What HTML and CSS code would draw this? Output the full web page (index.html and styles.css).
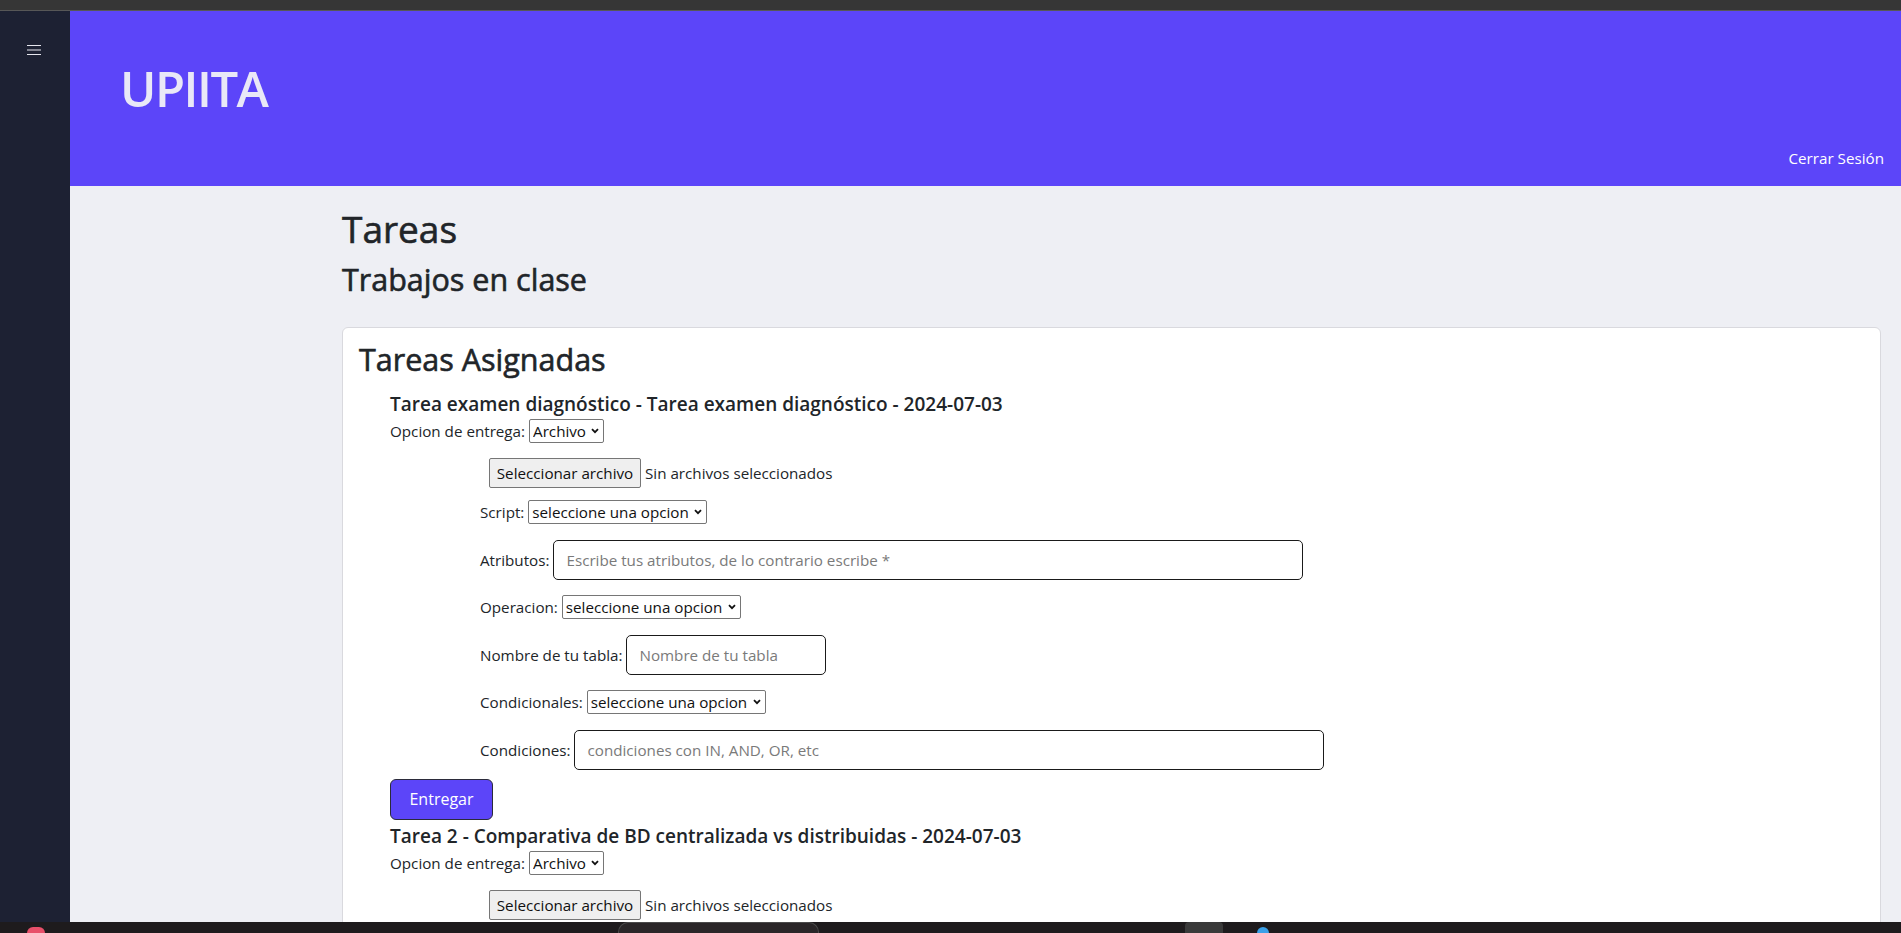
FILE: index.html
```html
<!DOCTYPE html>
<html lang="es">
<head>
<meta charset="utf-8">
<title>UPIITA - Tareas</title>
<link rel="stylesheet" href="styles.css">
</head>
<body>
  <div class="os-top"></div>
  <div class="app">
    <aside class="sidebar">
      <button class="menu-btn" type="button" aria-label="Menú">
        <svg width="14" height="11" viewBox="0 0 14 11"><path d="M0 0.5H14M0 5H14M0 9.5H14" stroke="#e6e6ee" stroke-width="1.2"/></svg>
      </button>
    </aside>
    <div class="main">
      <header class="topbar">
        <h1 class="brand">UPIITA</h1>
        <a class="logout" href="#">Cerrar Sesión</a>
      </header>
      <div class="content">
        <h1 class="page-title">Tareas</h1>
        <h2 class="page-sub">Trabajos en clase</h2>
        <section class="card">
          <h2 class="card-title">Tareas Asignadas</h2>
          <ul class="task-list">
            <li class="task">
              <h5 class="task-title">Tarea examen diagnóstico - Tarea examen diagnóstico - 2024-07-03</h5>
              <div class="delivery">
                <label class="lbl">Opcion de entrega:</label>
                <select class="sel sel-small"><option>Archivo</option></select>
              </div>
              <div class="file-row">
                <span class="file-btn">Seleccionar archivo</span>
                <span class="file-status">Sin archivos seleccionados</span>
              </div>
              <div class="query">
                <div class="row">
                  <label class="lbl">Script:</label>
                  <select class="sel"><option>seleccione una opcion</option></select>
                </div>
                <div class="row">
                  <label class="lbl">Atributos:</label>
                  <input class="txt txt-wide" type="text" placeholder="Escribe tus atributos, de lo contrario escribe *">
                </div>
                <div class="row">
                  <label class="lbl">Operacion:</label>
                  <select class="sel"><option>seleccione una opcion</option></select>
                </div>
                <div class="row">
                  <label class="lbl">Nombre de tu tabla:</label>
                  <input class="txt txt-short" type="text" placeholder="Nombre de tu tabla">
                </div>
                <div class="row">
                  <label class="lbl">Condicionales:</label>
                  <select class="sel"><option>seleccione una opcion</option></select>
                </div>
                <div class="row">
                  <label class="lbl">Condiciones:</label>
                  <input class="txt txt-wide" type="text" placeholder="condiciones con IN, AND, OR, etc">
                </div>
              </div>
              <button class="submit" type="button">Entregar</button>
            </li>
            <li class="task">
              <h5 class="task-title">Tarea 2 - Comparativa de BD centralizada vs distribuidas - 2024-07-03</h5>
              <div class="delivery">
                <label class="lbl">Opcion de entrega:</label>
                <select class="sel sel-small"><option>Archivo</option></select>
              </div>
              <div class="file-row">
                <span class="file-btn">Seleccionar archivo</span>
                <span class="file-status">Sin archivos seleccionados</span>
              </div>
            </li>
          </ul>
        </section>
      </div>
    </div>
  </div>
  <div class="taskbar">
    <span class="tb-app tb-pink"></span>
    <span class="tb-search"></span>
    <span class="tb-icon"></span>
    <span class="tb-app tb-blue"></span>
  </div>
</body>
</html>
```

FILE: styles.css
```css
* { box-sizing: border-box; }

html, body {
  margin: 0;
  height: 933px;
  overflow: hidden;
}

body {
  display: flex;
  flex-direction: column;
  font-family: "Open Sans", "Noto Sans", sans-serif;
  font-size: 15.2px;
  line-height: 24px;
  color: #212529;
  background: #1d2133;
}

.os-top {
  flex: 0 0 11px;
  background: #363636;
  border-bottom: 1px solid #575757;
}

.app {
  flex: 1 1 auto;
  display: flex;
  min-height: 0;
  overflow: hidden;
}

.sidebar {
  flex: 0 0 70px;
  background: #1d2133;
  padding: 34px 0 0 27px;
}

.menu-btn {
  display: block;
  padding: 0;
  border: 0;
  background: none;
  line-height: 0;
}

.main {
  flex: 1 1 auto;
  display: flex;
  flex-direction: column;
  background: #eeeff4;
  min-width: 0;
  overflow: hidden;
}

.topbar {
  flex: 0 0 175px;
  display: flex;
  justify-content: space-between;
  background: #5c45f9;
  padding: 0 17px 16px 50px;
}

.brand {
  margin: 45px 0 0;
  font-size: 49px;
  line-height: 64px;
  font-weight: 600;
  letter-spacing: -1.5px;
  color: #e9e8f7;
}

.logout {
  align-self: flex-end;
  color: #ffffff;
  text-decoration: none;
  font-size: 15.2px;
  line-height: 24px;
}

.content {
  padding: 19px 20px 0 272px;
}

.page-title,
.page-sub,
.card-title {
  font-weight: 400;
  -webkit-text-stroke: 0.6px currentColor;
}

.page-title {
  margin: 0 0 7px;
  font-size: 37px;
  line-height: 48px;
}

.page-sub {
  margin: 0 0 29px;
  font-size: 30.5px;
  line-height: 38px;
}

.card {
  background: #ffffff;
  border: 1px solid #d9d9de;
  border-radius: 6px;
  padding: 12px 16px 40px;
}

.card-title {
  margin: 0 0 14px;
  font-size: 30.5px;
  line-height: 38px;
}

.task-list {
  list-style: none;
  margin: 0;
  padding: 0 0 0 31px;
}

.task-title {
  margin: 0;
  font-size: 19px;
  line-height: 24px;
  font-weight: 600;
}

.delivery {
  display: flex;
  align-items: center;
  gap: 4px;
  height: 24px;
  margin-top: 3px;
}

.lbl {
  white-space: nowrap;
}

.sel {
  -webkit-appearance: none;
  appearance: none;
  height: 24px;
  width: 179px;
  font-family: inherit;
  font-size: 15.2px;
  color: #111;
  padding: 0 14px 0 3px;
  border: 1px solid #767676;
  border-radius: 2px;
  background: #fff url("data:image/svg+xml,%3Csvg xmlns='http://www.w3.org/2000/svg' width='8' height='6' viewBox='0 0 8 6'%3E%3Cpath d='M1 1.2L4 4.2L7 1.2' fill='none' stroke='%23111' stroke-width='1.8'/%3E%3C/svg%3E") no-repeat right 4px center / 8px 6px;
}

.sel-small {
  width: 75px;
}

.file-row {
  display: flex;
  align-items: center;
  gap: 4px;
  margin: 15px 0 0 99px;
  height: 30px;
}

.file-btn {
  display: inline-flex;
  align-items: center;
  justify-content: center;
  height: 30px;
  width: 152px;
  background: #efefef;
  border: 1px solid #767676;
  border-radius: 2px;
  color: #111;
  white-space: nowrap;
}

.file-status {
  white-space: nowrap;
}

.query {
  display: flex;
  flex-direction: column;
  gap: 7.5px;
  margin-top: 4px;
  padding-left: 90px;
}

.row {
  display: flex;
  align-items: center;
  gap: 4px;
  height: 40px;
}

.txt {
  height: 40px;
  font-family: inherit;
  font-size: 15.2px;
  padding: 0 12px;
  border: 1px solid #1a1a1a;
  border-radius: 5px;
  background: #fff;
  color: #212529;
}

.txt::placeholder {
  color: #7a7a7a;
}

.txt-wide { width: 750px; }
.txt-short { width: 200px; }

.submit {
  display: block;
  margin-top: 9px;
  width: 103px;
  height: 41px;
  background: #5c45f9;
  color: #ffffff;
  border: 1px solid #2b2b3a;
  border-radius: 6px;
  font-family: inherit;
  font-size: 16px;
}

.task + .task {
  margin-top: 4px;
}

.taskbar {
  flex: 0 0 11px;
  display: flex;
  align-items: flex-start;
  background: #1e1b1d;
  padding-left: 27px;
}

.tb-app {
  width: 18px;
  height: 6px;
  margin-top: 5px;
  border-radius: 9px 9px 0 0;
}

.tb-pink { background: #e8506a; }

.tb-search {
  width: 201px;
  height: 11px;
  margin: 0 0 0 573px;
  border: 1px solid #4a4a4a;
  border-bottom: 0;
  border-radius: 10px 10px 0 0;
  background: #2a2628;
}

.tb-icon {
  width: 38px;
  height: 11px;
  margin-left: 366px;
  background: #3a3a3a;
  border-radius: 4px 4px 0 0;
}

.tb-blue {
  background: #3aa0e8;
  margin-left: 34px;
  width: 12px;
}
```
